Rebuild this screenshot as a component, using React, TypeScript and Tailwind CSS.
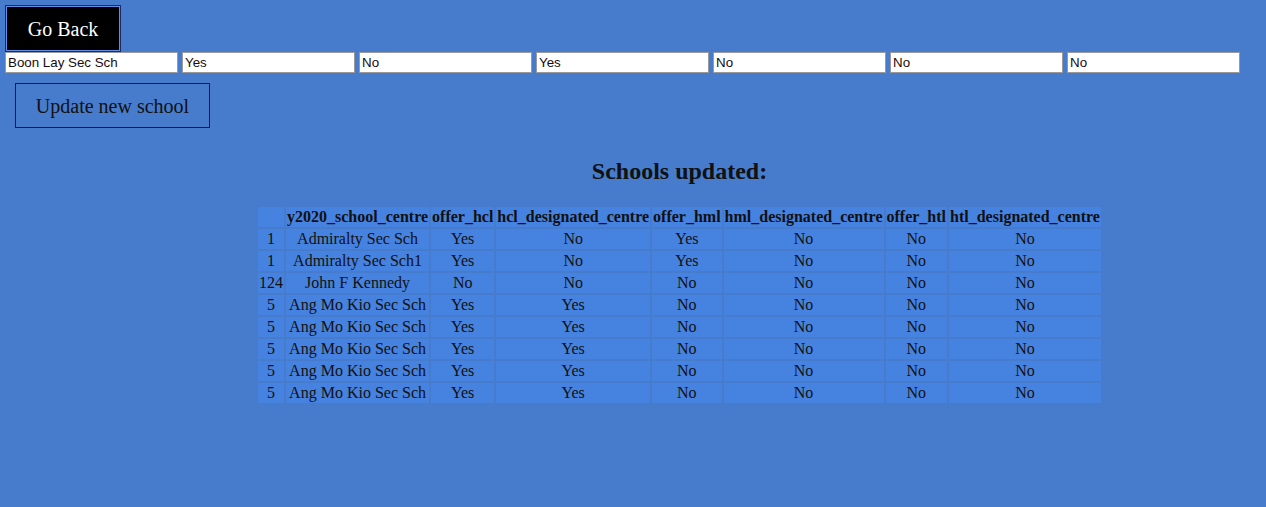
import React from "react";

const rows = [
  ["1", "Admiralty Sec Sch", "Yes", "No", "Yes", "No", "No", "No"],
  ["1", "Admiralty Sec Sch1", "Yes", "No", "Yes", "No", "No", "No"],
  ["124", "John F Kennedy", "No", "No", "No", "No", "No", "No"],
  ["5", "Ang Mo Kio Sec Sch", "Yes", "Yes", "No", "No", "No", "No"],
  ["5", "Ang Mo Kio Sec Sch", "Yes", "Yes", "No", "No", "No", "No"],
  ["5", "Ang Mo Kio Sec Sch", "Yes", "Yes", "No", "No", "No", "No"],
  ["5", "Ang Mo Kio Sec Sch", "Yes", "Yes", "No", "No", "No", "No"],
  ["5", "Ang Mo Kio Sec Sch", "Yes", "Yes", "No", "No", "No", "No"],
];

const headers = [
  "",
  "y2020_school_centre",
  "offer_hcl",
  "hcl_designated_centre",
  "offer_hml",
  "hml_designated_centre",
  "offer_htl",
  "htl_designated_centre",
];

const inputs = ["Boon Lay Sec Sch", "Yes", "No", "Yes", "No", "No", "No"];

export default function App() {
  return (
    <div className="min-h-[507px] w-full bg-[#477bcc] pt-[5px] pl-[5px] font-['Liberation_Serif',serif] text-[#111]">
      <button className="flex h-[47px] w-[116px] items-center justify-center border border-[#1b2a6b] bg-black text-[20px] text-white outline outline-1 -outline-offset-2 outline-[#5f8fe6]">
        Go Back
      </button>
      <div className="flex gap-[4px]">
        {inputs.map((v, i) => (
          <input
            key={i}
            readOnly
            value={v}
            className="h-[21px] w-[173px] border border-[#9a9a9a] bg-white px-[2px] font-['Liberation_Sans',sans-serif] text-[13.33px] text-[#1a0a0a] outline-none"
          />
        ))}
      </div>
      <button className="ml-[10px] mt-[10px] flex h-[45px] w-[195px] items-center justify-center border border-[#10184a] bg-transparent text-[20px] text-[#111]">
        Update new school
      </button>
      <div className="flex flex-col items-center pl-[88px]">
        <h2 className="mt-[29px] text-[24px] font-bold leading-[28px]">Schools updated:</h2>
        <table className="mt-[20px] border-separate border-spacing-[2px] text-[16px] leading-[18px]">
          <thead>
            <tr>
              {headers.map((h, i) => (
                <th key={i} className="bg-[#4682df] px-[1px] py-[1px] font-bold">
                  {h}
                </th>
              ))}
            </tr>
          </thead>
          <tbody>
            {rows.map((r, i) => (
              <tr key={i}>
                {r.map((c, j) => (
                  <td key={j} className="bg-[#4682df] px-[1px] py-[1px] text-center">
                    {c}
                  </td>
                ))}
              </tr>
            ))}
          </tbody>
        </table>
      </div>
    </div>
  );
}
